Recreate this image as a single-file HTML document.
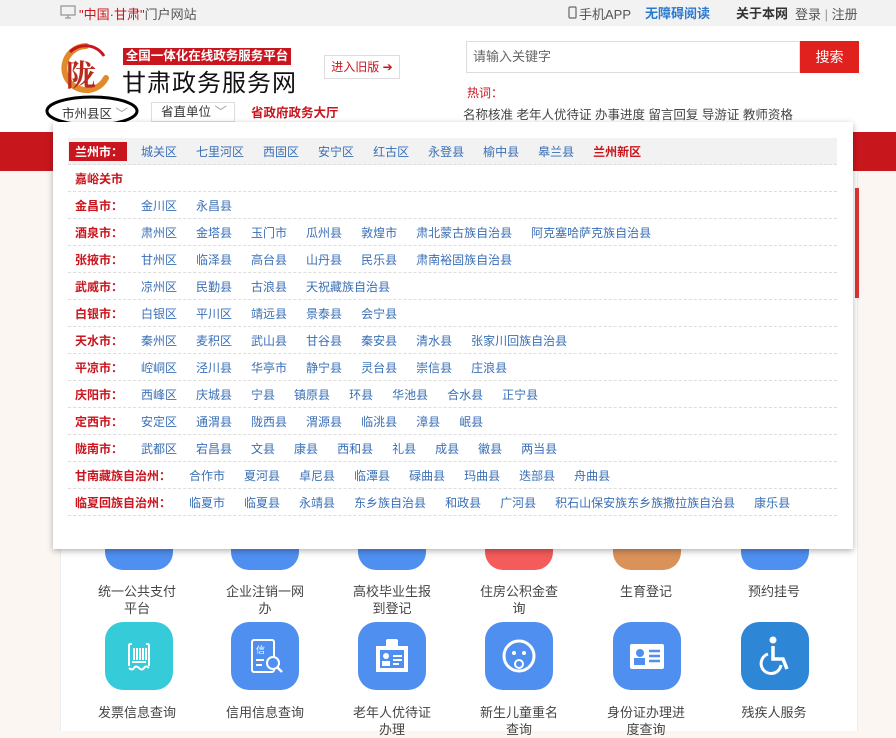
<!DOCTYPE html>
<html><head><meta charset="utf-8">
<style>
*{margin:0;padding:0;box-sizing:border-box}
body{width:896px;height:725px;overflow:hidden;position:relative;background:#fbf6f1;font-family:"Liberation Sans","Noto Sans CJK SC",sans-serif;font-size:12px;color:#333}
.abs{position:absolute}
.top{left:0;top:0;width:896px;height:26px;background:#f2f2f2}
.hdr{left:0;top:26px;width:896px;height:106px;background:#fff}
.band{left:0;top:132px;width:896px;height:39px;background:#c8161d}
.content{left:60px;top:171px;width:798px;height:560px;background:#fff;border-left:1px solid #eee;border-right:1px solid #eee}
.panel{left:53px;top:122px;width:800px;height:427px;background:#fff;box-shadow:0 2px 6px rgba(0,0,0,.3)}
.row{position:absolute;left:15px;width:769px;height:27px;border-bottom:1px dashed #ddd;display:flex;align-items:center;white-space:nowrap}
.row .lb{color:#c9151e;font-weight:bold;font-size:12px;width:73px;padding-left:7px;flex:none}
.row .lb.w{width:121px}
.row a{color:#3a6fb5;margin-right:19px;text-decoration:none;font-size:12px}
.row a.r{color:#c9151e;font-weight:bold}
.ic{position:absolute;width:68px;height:68px;border-radius:18px}
.lbl{position:absolute;width:100px;text-align:center;font-size:13px;color:#444;line-height:17px}
</style></head><body>
<div class="abs top"></div>
<svg class="abs" style="left:60px;top:5px" width="16" height="15" viewBox="0 0 16 15"><rect x="1" y="1" width="14" height="9" fill="none" stroke="#999" stroke-width="1.3"/><path d="M5 13h6M8 10v3" stroke="#999" stroke-width="1.3"/></svg>
<div class="abs" style="left:79px;top:4px;font-size:13px;color:#555"><span style="color:#c9151e">"中国·甘肃"</span>门户网站</div>
<svg class="abs" style="left:568px;top:6px" width="9" height="13"><rect x="1" y="1" width="7" height="11" rx="1" fill="none" stroke="#666" stroke-width="1.2"/></svg>
<div class="abs" style="left:579px;top:4px;font-size:13px;color:#555">手机APP</div>
<div class="abs" style="left:645px;top:3px;font-size:13px;color:#2b7ad0;font-weight:bold">无障碍阅读</div>
<div class="abs" style="left:736px;top:3px;font-size:13px;color:#333;font-weight:bold">关于本网</div>
<div class="abs" style="left:795px;top:4px;font-size:13px;color:#555">登录 <span style="color:#999">|</span> 注册</div>

<div class="abs hdr"></div>
<svg class="abs" style="left:56px;top:42px" width="58" height="52" viewBox="0 0 58 52"><path d="M30 4 A22 22 0 1 0 50 36" fill="none" stroke="#e08a2a" stroke-width="6" stroke-linecap="round"/><path d="M14 10 A22 22 0 0 1 48 14" fill="none" stroke="#c9151e" stroke-width="3"/><text x="10" y="44" font-size="30" font-weight="bold" fill="#b82a1c" font-family="Noto Serif CJK SC,serif">陇</text></svg>
<div class="abs" style="left:123px;top:48px;height:17px;width:168px;background:#c9151e;color:#fff;font-size:12.5px;font-weight:bold;line-height:17px;text-align:center">全国一体化在线政务服务平台</div>
<div class="abs" style="left:122px;top:63px;font-size:24px;color:#111;letter-spacing:1px">甘肃政务服务网</div>
<div class="abs" style="left:324px;top:55px;width:76px;height:24px;border:1px solid #ddd;color:#c9151e;font-size:12px;line-height:22px;text-align:center">进入旧版 ➔</div>
<div class="abs" style="left:466px;top:41px;width:334px;height:32px;border:1px solid #ddd;color:#666;font-size:13px;line-height:30px;padding-left:6px">请输入关键字</div>
<div class="abs" style="left:800px;top:41px;width:59px;height:32px;background:#e0211e;color:#fff;font-size:14px;line-height:32px;text-align:center">搜索</div>
<div class="abs" style="left:467px;top:84px;color:#c9151e;font-size:12px">热词：</div>
<div class="abs" style="left:463px;top:104px;color:#444;font-size:12.5px">名称核准 老年人优待证 办事进度 留言回复 导游证 教师资格</div>
<div class="abs" style="left:62px;top:103px;font-size:12.5px;color:#333">市州县区 <span style="color:#999">﹀</span></div>
<svg class="abs" style="left:44px;top:93px" width="96" height="36"><ellipse cx="48" cy="18" rx="45" ry="14" fill="none" stroke="#000" stroke-width="3"/></svg>
<div class="abs" style="left:151px;top:102px;width:84px;height:20px;border:1px solid #ddd;font-size:12.5px;line-height:18px;padding-left:9px">省直单位 <span style="color:#999">﹀</span></div>
<div class="abs" style="left:251px;top:102px;color:#c9151e;font-weight:bold;font-size:12.5px">省政府政务大厅</div>

<div class="abs band"></div>
<div class="abs content"></div>
<div class="abs" style="left:855px;top:188px;width:4px;height:110px;background:#d33"></div>

<!-- icons -->
<div class="ic" style="left:105px;top:502px;background:#4f8fef"></div>
<div class="ic" style="left:231px;top:502px;background:#4f8fef"></div>
<div class="ic" style="left:358px;top:502px;background:#4f8fef"></div>
<div class="ic" style="left:485px;top:502px;background:#f45b5b"></div>
<div class="ic" style="left:613px;top:502px;background:#d9925a"></div>
<div class="ic" style="left:741px;top:502px;background:#4f8fef"></div>
<div class="lbl" style="left:87px;top:583px">统一公共支付<br>平台</div>
<div class="lbl" style="left:215px;top:583px">企业注销一网<br>办</div>
<div class="lbl" style="left:342px;top:583px">高校毕业生报<br>到登记</div>
<div class="lbl" style="left:469px;top:583px">住房公积金查<br>询</div>
<div class="lbl" style="left:596px;top:583px">生育登记</div>
<div class="lbl" style="left:724px;top:583px">预约挂号</div>

<div class="ic" style="left:105px;top:622px;background:#36cbd9"><svg width="68" height="68"><path d="M24 22v22M44 22v22M24 22h3M44 22h-3M29 26v12M32 26v12M35 26v12M38 26v12M41 26v12M27 40h14" stroke="#fff" stroke-width="2" fill="none"/><path d="M24 46q3 3 5 0t5 0 5 0 5 0" stroke="#fff" stroke-width="2" fill="none"/></svg></div>
<div class="ic" style="left:231px;top:622px;background:#4f8fef"><svg width="68" height="68"><rect x="21" y="18" width="22" height="32" rx="2" fill="none" stroke="#fff" stroke-width="2"/><text x="25" y="31" font-size="9" fill="#fff">信</text><path d="M25 38h8M25 43h6" stroke="#fff" stroke-width="2"/><circle cx="42" cy="41" r="6" fill="#4f8fef" stroke="#fff" stroke-width="2"/><path d="M46 45l5 5" stroke="#fff" stroke-width="2.5"/></svg></div>
<div class="ic" style="left:358px;top:622px;background:#4f8fef"><svg width="68" height="68"><rect x="18" y="24" width="32" height="26" fill="#fff"/><rect x="28" y="17" width="12" height="9" rx="2" fill="#fff"/><rect x="22" y="28" width="24" height="18" fill="#4f8fef"/><circle cx="28" cy="34" r="3" fill="#fff"/><rect x="24" y="39" width="8" height="5" fill="#fff"/><path d="M35 34h9M35 38h9M35 42h6" stroke="#fff" stroke-width="2"/></svg></div>
<div class="ic" style="left:485px;top:622px;background:#4f8fef"><svg width="68" height="68"><circle cx="34" cy="34" r="15" fill="none" stroke="#fff" stroke-width="3"/><circle cx="29" cy="31" r="2" fill="#fff"/><circle cx="39" cy="31" r="2" fill="#fff"/><circle cx="34" cy="42" r="4" fill="none" stroke="#fff" stroke-width="2"/></svg></div>
<div class="ic" style="left:613px;top:622px;background:#4f8fef"><svg width="68" height="68"><rect x="17" y="22" width="34" height="25" rx="2" fill="#fff"/><circle cx="27" cy="31" r="4" fill="#4f8fef"/><rect x="21" y="36" width="11" height="7" fill="#4f8fef"/><path d="M36 29h11M36 34h11M36 39h11" stroke="#4f8fef" stroke-width="2.5"/></svg></div>
<div class="ic" style="left:741px;top:622px;background:#2d86d6"><svg width="68" height="68"><circle cx="32" cy="18" r="3.5" fill="#fff"/><path d="M32 24v13h10l4 10" stroke="#fff" stroke-width="3.5" fill="none"/><path d="M27 32a10 10 0 1 0 13 11" stroke="#fff" stroke-width="3" fill="none"/></svg></div>
<div class="lbl" style="left:87px;top:704px">发票信息查询</div>
<div class="lbl" style="left:215px;top:704px">信用信息查询</div>
<div class="lbl" style="left:342px;top:704px">老年人优待证<br>办理</div>
<div class="lbl" style="left:469px;top:704px">新生儿童重名<br>查询</div>
<div class="lbl" style="left:596px;top:704px">身份证办理进<br>度查询</div>
<div class="lbl" style="left:724px;top:704px">残疾人服务</div>

<div class="abs panel">
<div class="row" style="top:16px;background:#f2f2f2"><span class="lb" style="margin-left:1px;margin-right:14px;width:58px;background:#c9151e;color:#fff;padding:1px 0 1px 6px">兰州市：</span><a>城关区</a><a>七里河区</a><a>西固区</a><a>安宁区</a><a>红古区</a><a>永登县</a><a>榆中县</a><a>皋兰县</a><a class="r">兰州新区</a></div>
<div class="row" style="top:43px"><span class="lb">嘉峪关市</span></div>
<div class="row" style="top:70px"><span class="lb">金昌市：</span><a>金川区</a><a>永昌县</a></div>
<div class="row" style="top:97px"><span class="lb">酒泉市：</span><a>肃州区</a><a>金塔县</a><a>玉门市</a><a>瓜州县</a><a>敦煌市</a><a>肃北蒙古族自治县</a><a>阿克塞哈萨克族自治县</a></div>
<div class="row" style="top:124px"><span class="lb">张掖市：</span><a>甘州区</a><a>临泽县</a><a>高台县</a><a>山丹县</a><a>民乐县</a><a>肃南裕固族自治县</a></div>
<div class="row" style="top:151px"><span class="lb">武威市：</span><a>凉州区</a><a>民勤县</a><a>古浪县</a><a>天祝藏族自治县</a></div>
<div class="row" style="top:178px"><span class="lb">白银市：</span><a>白银区</a><a>平川区</a><a>靖远县</a><a>景泰县</a><a>会宁县</a></div>
<div class="row" style="top:205px"><span class="lb">天水市：</span><a>秦州区</a><a>麦积区</a><a>武山县</a><a>甘谷县</a><a>秦安县</a><a>清水县</a><a>张家川回族自治县</a></div>
<div class="row" style="top:232px"><span class="lb">平凉市：</span><a>崆峒区</a><a>泾川县</a><a>华亭市</a><a>静宁县</a><a>灵台县</a><a>崇信县</a><a>庄浪县</a></div>
<div class="row" style="top:259px"><span class="lb">庆阳市：</span><a>西峰区</a><a>庆城县</a><a>宁县</a><a>镇原县</a><a>环县</a><a>华池县</a><a>合水县</a><a>正宁县</a></div>
<div class="row" style="top:286px"><span class="lb">定西市：</span><a>安定区</a><a>通渭县</a><a>陇西县</a><a>渭源县</a><a>临洮县</a><a>漳县</a><a>岷县</a></div>
<div class="row" style="top:313px"><span class="lb">陇南市：</span><a>武都区</a><a>宕昌县</a><a>文县</a><a>康县</a><a>西和县</a><a>礼县</a><a>成县</a><a>徽县</a><a>两当县</a></div>
<div class="row" style="top:340px"><span class="lb w">甘南藏族自治州：</span><a>合作市</a><a>夏河县</a><a>卓尼县</a><a>临潭县</a><a>碌曲县</a><a>玛曲县</a><a>迭部县</a><a>舟曲县</a></div>
<div class="row" style="top:367px"><span class="lb w">临夏回族自治州：</span><a>临夏市</a><a>临夏县</a><a>永靖县</a><a>东乡族自治县</a><a>和政县</a><a>广河县</a><a>积石山保安族东乡族撒拉族自治县</a><a>康乐县</a></div>
</div>
</body></html>
